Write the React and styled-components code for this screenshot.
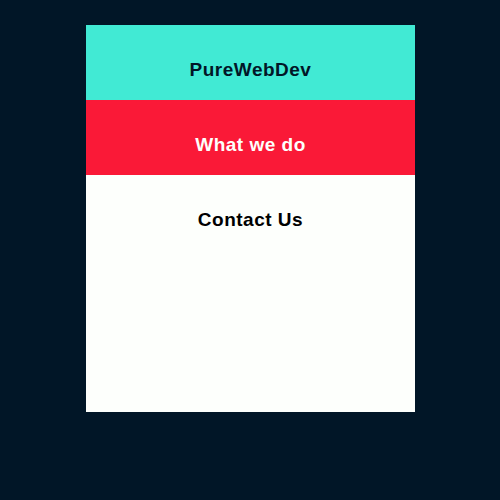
import React from "react";
import styled, { createGlobalStyle } from "styled-components";

const Global = createGlobalStyle`
  html, body { margin: 0; padding: 0; background: #011627; }
  body { width: 500px; height: 500px; font-family: "Liberation Sans", Arial, sans-serif; }
`;

const Page = styled.div`
  width: 500px;
  height: 500px;
  padding-top: 25px;
  box-sizing: border-box;
  display: flex;
  justify-content: center;
`;

const Menu = styled.nav`
  width: 329px;
  height: 387px;
  margin-left: 1px;
  background: #fdfffc;
  display: flex;
  flex-direction: column;
`;

const Item = styled.div`
  height: 75px;
  box-sizing: border-box;
  padding-top: 33px;
  text-align: center;
  font-size: 19px;
  line-height: 24px;
  font-weight: 700;
  letter-spacing: 0.5px;
  background: ${(p) => p.$bg || "transparent"};
  color: ${(p) => p.$fg || "#000"};
`;

export default function App() {
  return (
    <>
      <Global />
      <Page>
        <Menu>
          <Item $bg="#41ead4" $fg="#011627">PureWebDev</Item>
          <Item $bg="#fa1937" $fg="#fdfffc">What we do</Item>
          <Item $fg="#000">Contact Us</Item>
        </Menu>
      </Page>
    </>
  );
}
